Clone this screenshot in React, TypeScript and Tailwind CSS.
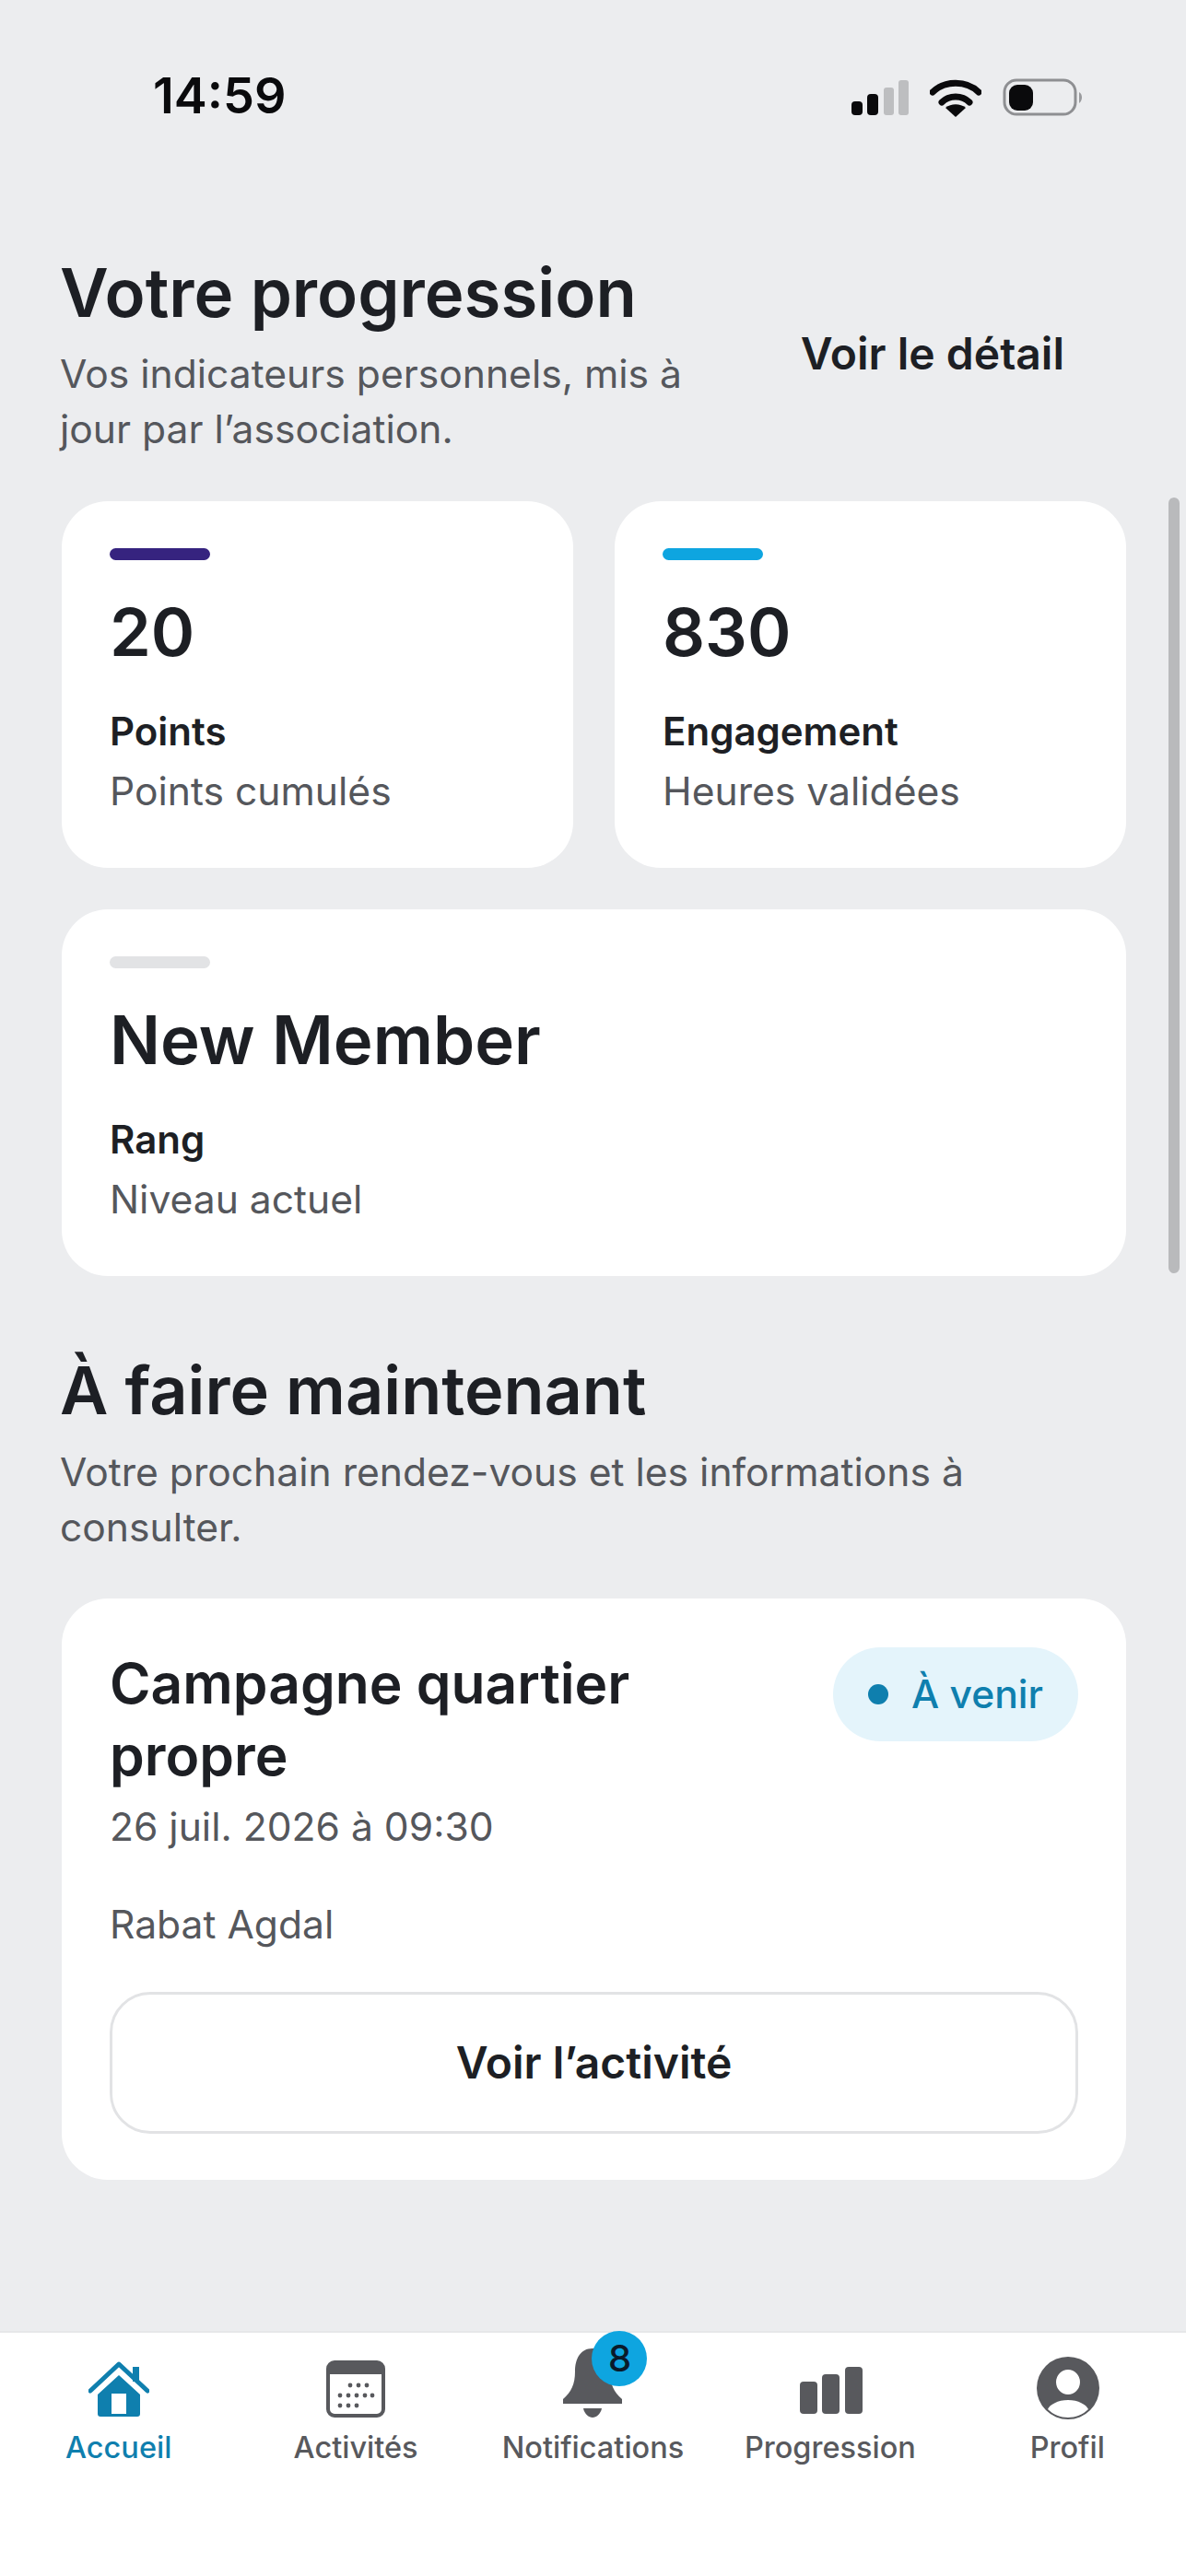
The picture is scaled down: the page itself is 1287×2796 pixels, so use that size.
const font = "font-['Inter','Noto_Sans',sans-serif]"

function StatusIcons() {
  return (
    <div className="flex items-center">
      <svg width="62" height="40" viewBox="0 0 62 40" className="mr-[23px]">
        <rect x="0" y="24" width="12" height="15" rx="4" fill="#0a0a0c" />
        <rect x="17" y="16" width="12" height="23" rx="4" fill="#0a0a0c" />
        <rect x="35" y="9" width="11" height="30" rx="3" fill="#bdbec0" />
        <rect x="51" y="1" width="11" height="38" rx="3" fill="#bdbec0" />
      </svg>
      <svg width="56" height="41" viewBox="0 0 56 41" className="mr-[23px]">
        <path d="M3 14 C16 1 40 1 53 14" stroke="#0a0a0c" strokeWidth="7" strokeLinecap="round" fill="none" />
        <path d="M13 25 C21 17 35 17 43 25" stroke="#0a0a0c" strokeWidth="7" strokeLinecap="round" fill="none" />
        <path d="M28 41 L17 31 C23 26 33 26 39 31 Z" fill="#0a0a0c" />
      </svg>
      <svg width="90" height="42" viewBox="0 0 90 42">
        <rect x="2" y="2" width="77" height="37" rx="13" fill="none" stroke="#8e8f92" strokeWidth="3" />
        <rect x="7" y="7" width="26" height="28" rx="9" fill="#0a0a0c" />
        <path d="M83 15 C87 17 87 24 83 27 Z" fill="#9a9b9e" />
      </svg>
    </div>
  )
}

function HomeIcon() {
  return (
    <svg width="66" height="62" viewBox="0 0 66 62">
      <path d="M2 33 L33 4 L64 33" stroke="#0f7fae" strokeWidth="5" strokeLinecap="round" strokeLinejoin="round" fill="none" />
      <rect x="48" y="7" width="7" height="16" fill="#0f7fae" />
      <path fillRule="evenodd" d="M33 16 L56 37 V58 a3 3 0 0 1 -3 3 H13 a3 3 0 0 1 -3 -3 V37 Z M25 36 V58 H41 V36 Z" fill="#0f7fae" />
    </svg>
  )
}

function CalendarIcon() {
  const dots = [
    [26, 27], [35, 27], [44, 27],
    [15, 38], [24, 38], [33, 38], [42, 38], [50, 38],
    [15, 49], [24, 49], [33, 49],
  ]
  return (
    <svg width="64" height="62" viewBox="0 0 64 62">
      <rect x="2" y="2" width="60" height="58" rx="7" fill="none" stroke="#58595d" strokeWidth="4" />
      <path d="M2 9 a7 7 0 0 1 7 -7 H55 a7 7 0 0 1 7 7 V15 H2 Z" fill="#58595d" />
      {dots.map(([x, y]) => (
        <circle key={`${x}-${y}`} cx={x} cy={y} r="2.4" fill="#58595d" />
      ))}
    </svg>
  )
}

function BellIcon() {
  return (
    <svg width="66" height="76" viewBox="0 0 66 76">
      <path d="M33 1 C46 1 52 12 52 26 C52 40 56 48 65 56 V61 H1 V56 C10 48 14 40 14 26 C14 12 20 1 33 1 Z" fill="#58595d" />
      <path d="M23 66 H43 C42 72 37 76 33 76 C29 76 24 72 23 66 Z" fill="#58595d" />
    </svg>
  )
}

function BarsIcon() {
  return (
    <svg width="68" height="52" viewBox="0 0 68 52" className="mb-[4px] ml-[2px]">
      <rect x="0" y="17" width="19" height="35" rx="4" fill="#58595d" />
      <rect x="24" y="9" width="19" height="43" rx="4" fill="#58595d" />
      <rect x="49" y="1" width="19" height="51" rx="4" fill="#58595d" />
    </svg>
  )
}

function ProfileIcon() {
  return (
    <svg width="68" height="68" viewBox="0 0 68 68" className="mb-[-2px] ml-[1px]">
      <path fillRule="evenodd" d="M34 0 a34 34 0 1 1 0 68 a34 34 0 1 1 0 -68 Z M34 14 a12.5 13 0 1 0 0 27 a12.5 13 0 1 0 0 -27 Z M34 47 C23 47 14 52 12 57 C18 63 26 66 34 66 C42 66 50 63 56 57 C54 52 45 47 34 47 Z" fill="#58595d" />
    </svg>
  )
}

function StatCard({ accent, value, title, sub, big }: { accent: string; value: string; title: string; sub: string; big?: boolean }) {
  return (
    <div className={`bg-white rounded-[50px] h-[398px] px-[52px] pt-[51px] ${big ? 'col-span-2' : ''}`}>
      <div className={`w-[109px] h-[13px] rounded-full ${accent}`} />
      <div className={`mt-[33px] leading-[90px] text-[#1d1f24] font-semibold ${big ? 'text-[72.5px]' : 'text-[72px]'}`}>{value}</div>
      <div className="mt-[33px] text-[42px] leading-[60px] font-semibold text-[#1d1f24]">{title}</div>
      <div className="mt-[5px] text-[42.6px] leading-[60px] text-[#55575c]">{sub}</div>
    </div>
  )
}

function NavItem({ label, active, children }: { label: string; active?: boolean; children: React.ReactNode }) {
  return (
    <div className="flex flex-col items-center">
      <div className="h-[97px] flex items-end pb-[5px]">{children}</div>
      <div className={`mt-[6px] text-[32.5px] leading-[44px] font-medium ${active ? 'text-[#0f7fae]' : 'text-[#58595d]'}`}>{label}</div>
    </div>
  )
}

export default function App() {
  return (
    <div className={`${font} relative w-[1287px] h-[2796px] overflow-hidden bg-[#ecedef] flex flex-col`}>
      {/* Status bar */}
      <div className="h-[210px] pt-[74px] pl-[166px] pr-[109px] flex items-start justify-between shrink-0">
        <span className="text-[54px] leading-[60px] font-semibold text-[#0a0a0c]">14:59</span>
        <div className="pt-[11px]"><StatusIcons /></div>
      </div>

      {/* Scroll thumb */}
      <div className="absolute left-[1268px] top-[540px] w-[12px] h-[842px] rounded-full bg-[#b9babc]" />

      <main className="flex-1 px-[65px]">
        <div className="flex items-center justify-between">
          <div className="w-[700px]">
            <h1 className="mt-[63px] text-[72.5px] leading-[90px] font-semibold text-[#1d1f24]">Votre progression</h1>
            <p className="mt-[13px] text-[42.6px] leading-[60px] text-[#55575c]">Vos indicateurs personnels, mis à jour par l’association.</p>
          </div>
          <span className="mr-[67px] mt-[62px] text-[48px] leading-[60px] font-semibold text-[#1d1f24]">Voir le détail</span>
        </div>

        <div className="mt-[48px] ml-[2px] w-[1155px] grid grid-cols-2 gap-[45px]">
          <StatCard accent="bg-[#36237f]" value="20" title="Points" sub="Points cumulés" />
          <StatCard accent="bg-[#0ea5e0]" value="830" title="Engagement" sub="Heures validées" />
          <StatCard accent="bg-[#e2e3e5]" value="New Member" title="Rang" sub="Niveau actuel" big />
        </div>

        <h2 className="mt-[79px] text-[72px] leading-[90px] font-semibold text-[#1d1f24]">À faire maintenant</h2>
        <p className="mt-[14px] w-[1100px] text-[42.6px] leading-[60px] text-[#55575c]">Votre prochain rendez-vous et les informations à consulter.</p>

        <div className="mt-[47px] ml-[2px] w-[1155px] h-[631px] bg-white rounded-[50px] p-[52px] pt-[53px]">
          <div className="flex items-start justify-between">
            <div>
              <div className="w-[640px] text-[60.5px] leading-[78px] font-semibold text-[#1d1f24]">Campagne quartier propre</div>
              <div className="mt-[9px] text-[42.6px] leading-[60px] text-[#55575c]">26 juil. 2026 à 09:30</div>
            </div>
            <div className="flex items-center gap-[25px] h-[102px] px-[38px] rounded-full bg-[#e4f4fb] text-[#0f7fae] text-[42.6px] font-medium">
              <span className="w-[22px] h-[22px] rounded-full bg-[#0f7fae]" />
              À venir
            </div>
          </div>
          <div className="mt-[46px] text-[42.6px] leading-[60px] text-[#55575c]">Rabat Agdal</div>
          <div className="mt-[43px] h-[154px] rounded-[44px] border-[3px] border-[#e2e3e5] flex items-center justify-center text-[48px] font-semibold text-[#1d1f24]">Voir l’activité</div>
        </div>
      </main>

      {/* Bottom nav */}
      <nav className="h-[266px] shrink-0 bg-white border-t-2 border-[#e6e7e9] grid grid-cols-5">
        <NavItem label="Accueil" active><HomeIcon /></NavItem>
        <NavItem label="Activités"><CalendarIcon /></NavItem>
        <NavItem label="Notifications">
          <div className="relative">
            <BellIcon />
            <span className="absolute left-[32px] top-[-18px] w-[60px] h-[60px] rounded-full bg-[#0ea5e0] flex items-center justify-center text-[40px] font-medium text-[#0a1a2a]">8</span>
          </div>
        </NavItem>
        <NavItem label="Progression"><BarsIcon /></NavItem>
        <NavItem label="Profil"><ProfileIcon /></NavItem>
      </nav>
    </div>
  )
}
